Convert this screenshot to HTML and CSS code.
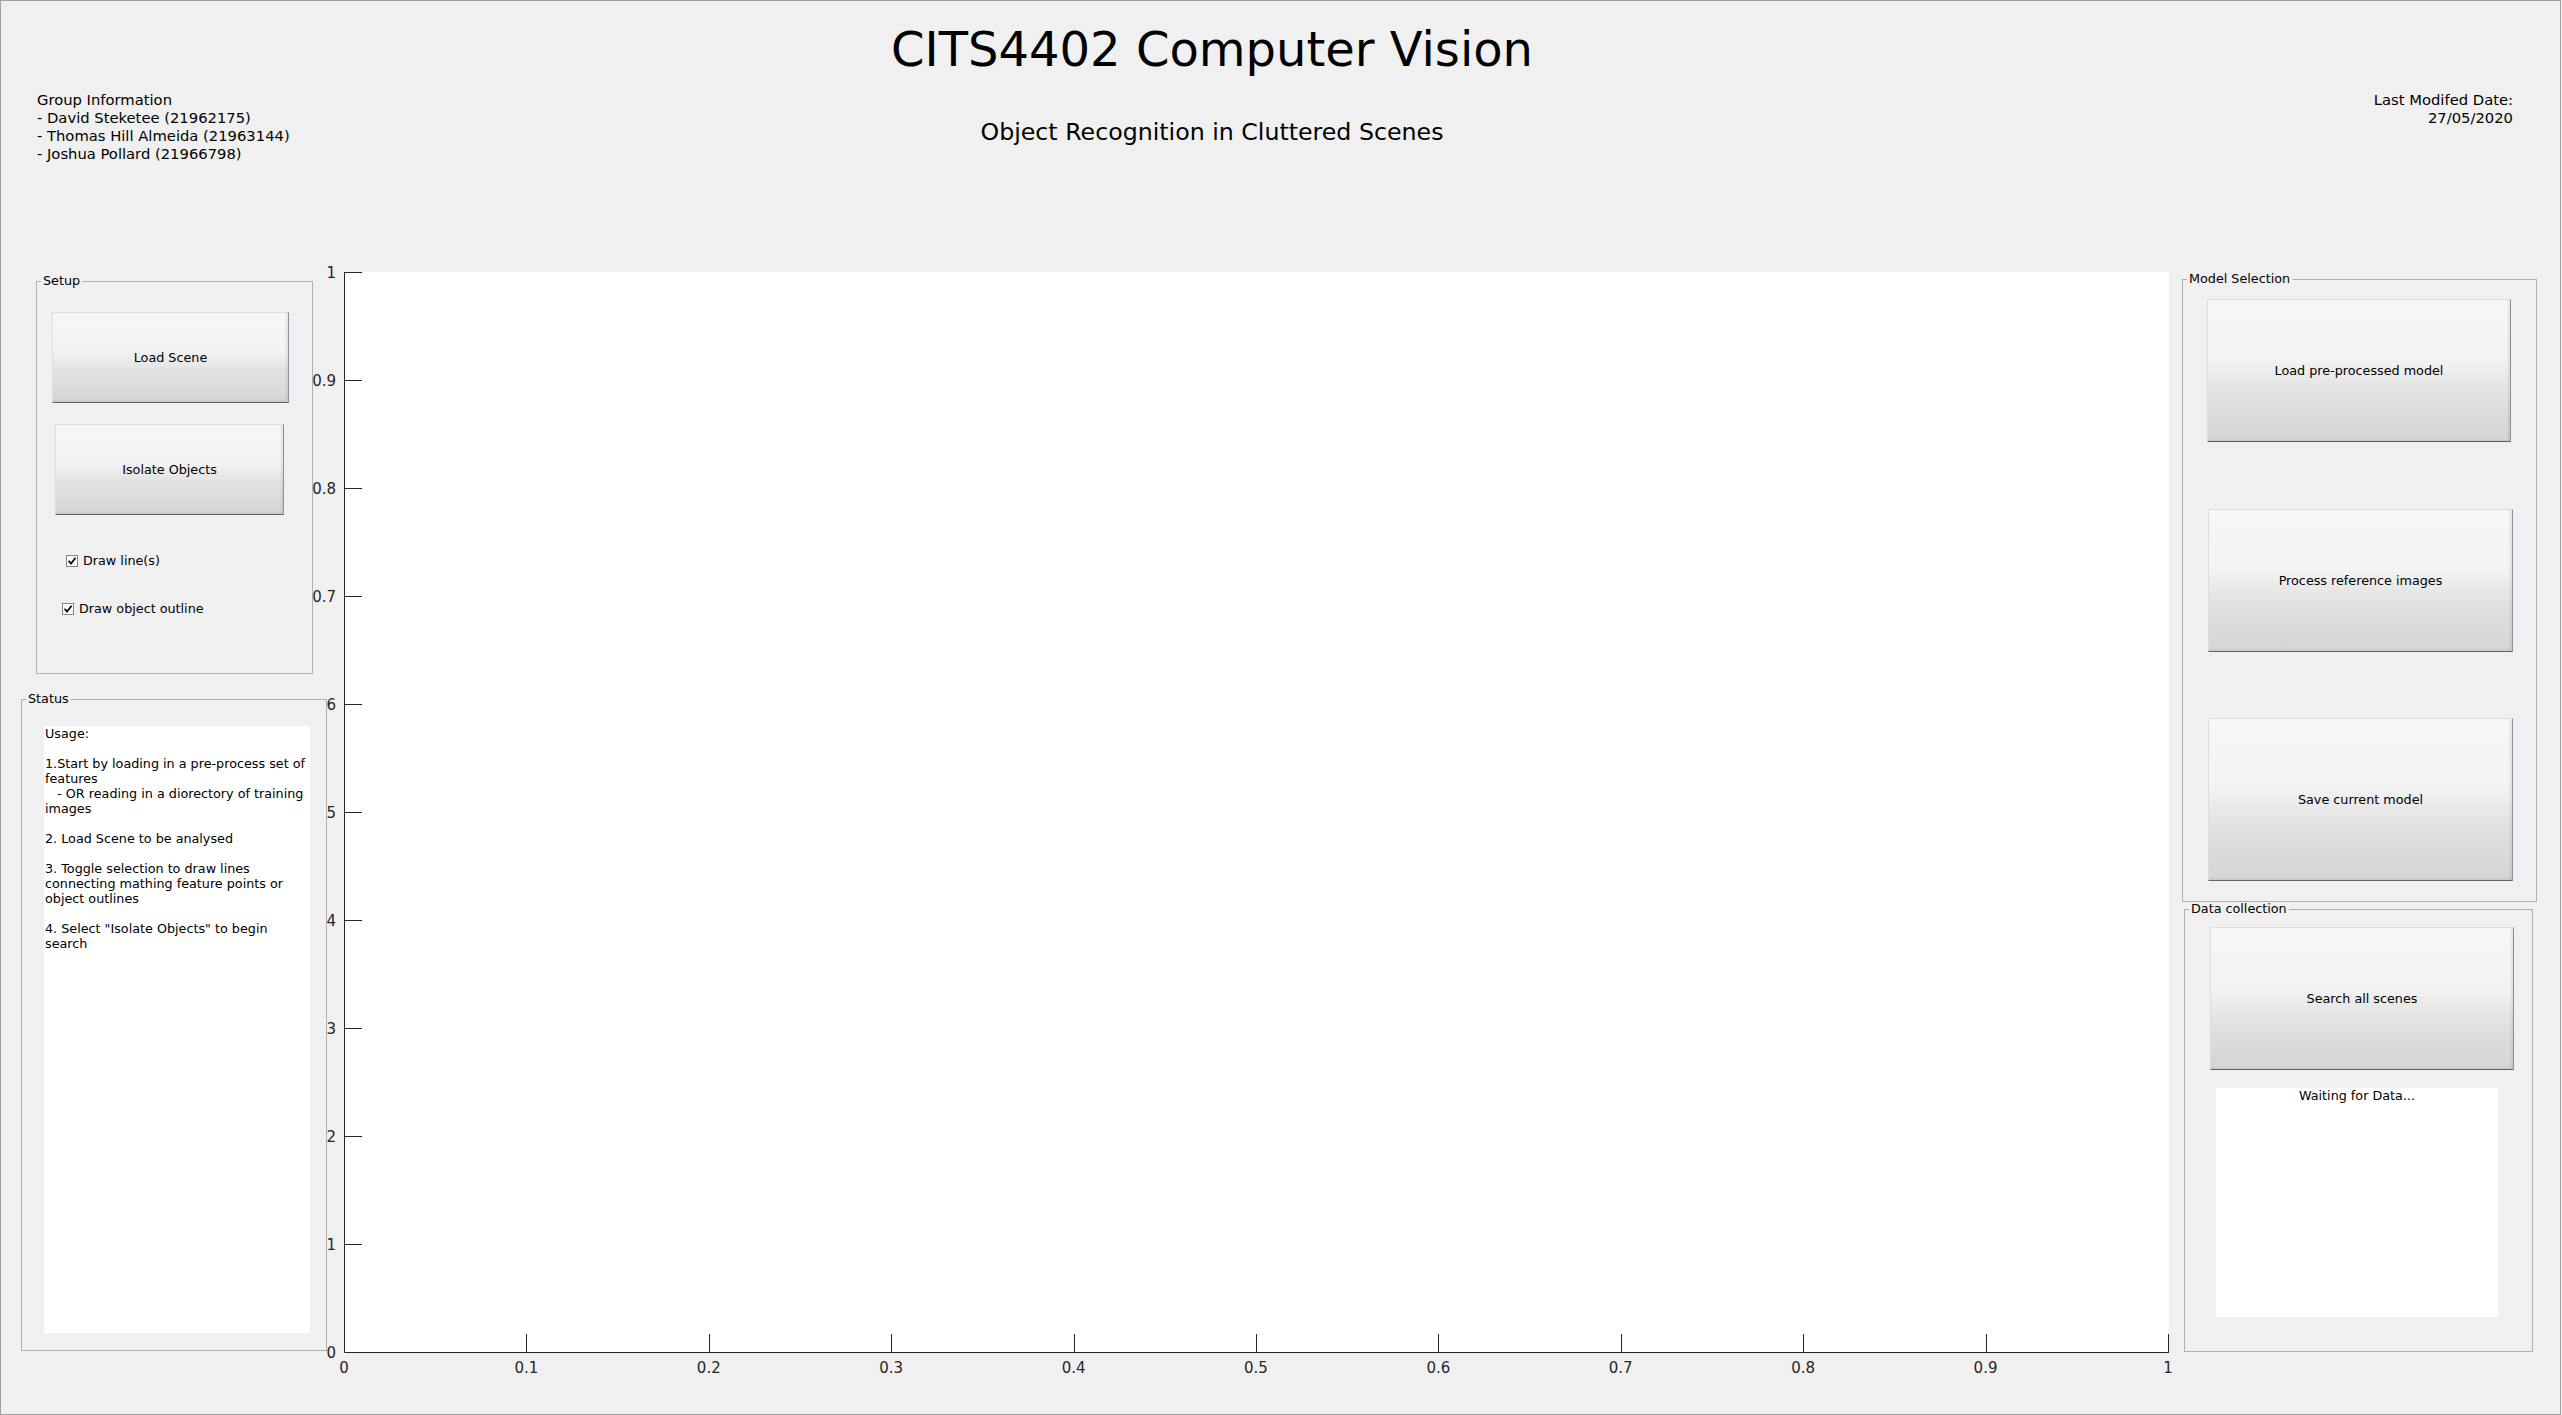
FILE: index.html
```html
<!DOCTYPE html>
<html lang="en">
<head>
<meta charset="utf-8">
<title>CITS4402 Computer Vision</title>
<link rel="stylesheet" href="styles.css">
</head>
<body>
<div class="window">
  <header class="header">
    <div class="group-info">Group Information<br>- David Steketee (21962175)<br>- Thomas Hill Almeida (21963144)<br>- Joshua Pollard (21966798)</div>
    <div class="titles">
      <h1 class="title">CITS4402 Computer Vision</h1>
      <h2 class="subtitle">Object Recognition in Cluttered Scenes</h2>
    </div>
    <div class="modified">Last Modifed Date:<br>27/05/2020</div>
  </header>

  <main class="main">
    <div class="left-col">
      <fieldset class="panel setup">
        <legend>Setup</legend>
        <button class="btn btn-load-scene" type="button">Load Scene</button>
        <button class="btn btn-isolate" type="button">Isolate Objects</button>
        <label class="check-row check-lines"><span class="box"><svg viewBox="0 0 10 10" width="10" height="10"><path d="M1.6 4.8 L4 7.6 L8.6 1.8" fill="none" stroke="#000" stroke-width="1.7"/></svg></span>Draw line(s)</label>
        <label class="check-row check-outline"><span class="box"><svg viewBox="0 0 10 10" width="10" height="10"><path d="M1.6 4.8 L4 7.6 L8.6 1.8" fill="none" stroke="#000" stroke-width="1.7"/></svg></span>Draw object outline</label>
      </fieldset>

      <fieldset class="panel status">
        <legend>Status</legend>
        <div class="status-text">Usage:

1.Start by loading in a pre-process set of
features
   - OR reading in a diorectory of training
images

2. Load Scene to be analysed

3. Toggle selection to draw lines
connecting mathing feature points or
object outlines

4. Select "Isolate Objects" to begin
search</div>
      </fieldset>
    </div>

    <div class="axes">
      <div class="axes-row">
        <div class="ylabels">
          <span>1</span><span>0.9</span><span>0.8</span><span>0.7</span><span>6</span><span>5</span><span>4</span><span>3</span><span>2</span><span>1</span><span>0</span>
        </div>
        <svg class="plot" width="1825" height="1081" viewBox="0 0 1825 1081">
          <rect x="0" y="0" width="1825" height="1081" fill="#fff"/>
          <g stroke="#262626" stroke-width="1" fill="none">
            <path d="M0.5 0 V1080.5 H1825"/>
            <path d="M0 0.5 H18 M0 108.5 H18 M0 216.5 H18 M0 324.5 H18 M0 432.5 H18 M0 540.5 H18 M0 648.5 H18 M0 756.5 H18 M0 864.5 H18 M0 972.5 H18"/>
            <path d="M182.5 1062 V1080 M365.5 1062 V1080 M547.5 1062 V1080 M730.5 1062 V1080 M912.5 1062 V1080 M1094.5 1062 V1080 M1277.5 1062 V1080 M1459.5 1062 V1080 M1642.5 1062 V1080 M1824.5 1062 V1080"/>
          </g>
        </svg>
      </div>
      <div class="xlabels">
        <span>0</span><span>0.1</span><span>0.2</span><span>0.3</span><span>0.4</span><span>0.5</span><span>0.6</span><span>0.7</span><span>0.8</span><span>0.9</span><span>1</span>
      </div>
    </div>

    <div class="right-col">
      <fieldset class="panel model">
        <legend>Model Selection</legend>
        <button class="btn btn-load-model" type="button">Load pre-processed model</button>
        <button class="btn btn-process" type="button">Process reference images</button>
        <button class="btn btn-save" type="button">Save current model</button>
      </fieldset>
      <fieldset class="panel data">
        <legend>Data collection</legend>
        <button class="btn btn-search" type="button">Search all scenes</button>
        <div class="data-out">Waiting for Data...</div>
      </fieldset>
    </div>
  </main>
</div>
</body>
</html>
```

FILE: styles.css
```css
* {
  box-sizing: border-box;
}

html, body {
  margin: 0;
  padding: 0;
  background: #f0f0f0;
}

body {
  font-family: "DejaVu Sans", "Liberation Sans", sans-serif;
  color: #000;
}

.window {
  width: 2561px;
  height: 1415px;
  border: 1px solid #a0a0a0;
  background: #f0f0f0;
  display: flex;
  flex-direction: column;
  overflow: hidden;
}

/* ---------- header ---------- */
.header {
  height: 264px;
  flex: none;
  display: grid;
  grid-template-columns: 411px 1600px 1fr;
  align-items: start;
}

.group-info {
  padding: 90px 0 0 36px;
  font-size: 14.75px;
  line-height: 18px;
}

.titles {
  text-align: center;
  padding-top: 20px;
}

.title {
  margin: 0;
  font-weight: normal;
  font-size: 48px;
  line-height: 56px;
}

.subtitle {
  margin: 41px 0 0;
  font-weight: normal;
  font-size: 23.7px;
  line-height: 28px;
}

.modified {
  padding: 90px 47px 0 0;
  text-align: right;
  font-size: 14.75px;
  line-height: 18px;
}

/* ---------- main ---------- */
.main {
  flex: 1;
  display: flex;
  align-items: flex-start;
}

.panel {
  margin: 0;
  padding: 0;
  min-width: 0;
  border: 1px solid #b0b0b0;
  display: flex;
  flex-direction: column;
  align-items: flex-start;
}

.panel legend {
  margin-left: 4px;
  padding: 0 2px;
  font-size: 12.75px;
  line-height: 14px;
}

.btn {
  display: flex;
  align-items: center;
  justify-content: center;
  padding: 0;
  font-family: "DejaVu Sans", "Liberation Sans", sans-serif;
  font-size: 12.75px;
  color: #000;
  background: linear-gradient(to bottom, #f7f7f7 0%, #f3f3f3 42%, #e4e4e4 62%, #d4d4d4 100%);
  border: 1px solid;
  border-color: #dcdce4 #8e8e98 #62626a #dcdce4;
  box-shadow: inset -2px -1px 2px rgba(0, 0, 0, 0.08);
  border-radius: 0;
}

/* left column */
.left-col {
  margin-left: 20px;
  width: 306px;
  display: flex;
  flex-direction: column;
}

.setup {
  margin: 9px 0 0 15px;
  width: 277px;
  height: 400px;
}

.btn-load-scene {
  margin: 24px 0 0 15px;
  width: 237px;
  height: 91px;
}

.btn-isolate {
  margin: 21px 0 0 18px;
  width: 229px;
  height: 91px;
}

.check-row {
  display: flex;
  align-items: center;
  gap: 5px;
  height: 17px;
  font-size: 12.75px;
}

.check-lines {
  margin: 37px 0 0 29px;
}

.check-outline {
  margin: 31px 0 0 25px;
}

.box {
  width: 12px;
  height: 12px;
  border: 1px solid #858585;
  background: #fff;
  display: flex;
  align-items: center;
  justify-content: center;
}

.status {
  margin-top: 18px;
  width: 306px;
  height: 659px;
}

.status-text {
  margin: 20px 0 0 22px;
  width: 266px;
  height: 607px;
  padding-left: 1px;
  background: #fff;
  font-size: 12.75px;
  line-height: 15px;
  white-space: pre;
  overflow: hidden;
}

/* axes */
.axes {
  margin-top: 7px;
  display: flex;
  flex-direction: column;
}

.axes-row {
  display: flex;
}

.ylabels {
  width: 17px;
  height: 1081px;
  padding: 0.5px 8px 0.5px 0;
  display: flex;
  flex-direction: column;
  justify-content: space-between;
  font-size: 15px;
  color: #262626;
}

.ylabels span {
  height: 0;
  display: flex;
  align-items: center;
  justify-content: flex-end;
  white-space: nowrap;
}

.plot {
  display: block;
  flex: none;
}

.xlabels {
  margin: 6px 0 0 17px;
  width: 1824px;
  display: flex;
  justify-content: space-between;
  font-size: 15px;
  line-height: 18px;
  color: #262626;
}

.xlabels span {
  width: 0;
  display: flex;
  justify-content: center;
  white-space: nowrap;
}

/* right column */
.right-col {
  margin: 7px 0 0 13px;
  display: flex;
  flex-direction: column;
}

.model {
  width: 355px;
  height: 630px;
}

.btn-load-model {
  margin: 13px 0 0 24px;
  width: 304px;
  height: 143px;
}

.btn-process {
  margin: 67px 0 0 25px;
  width: 305px;
  height: 143px;
}

.btn-save {
  margin: 66px 0 0 25px;
  width: 305px;
  height: 163px;
}

.data {
  margin-left: 2px;
  width: 349px;
  height: 450px;
}

.btn-search {
  margin: 11px 0 0 25px;
  width: 304px;
  height: 143px;
}

.data-out {
  margin: 18px 0 0 31px;
  width: 282px;
  height: 229px;
  background: #fff;
  text-align: center;
  font-size: 12.75px;
  line-height: 15px;
}
```
